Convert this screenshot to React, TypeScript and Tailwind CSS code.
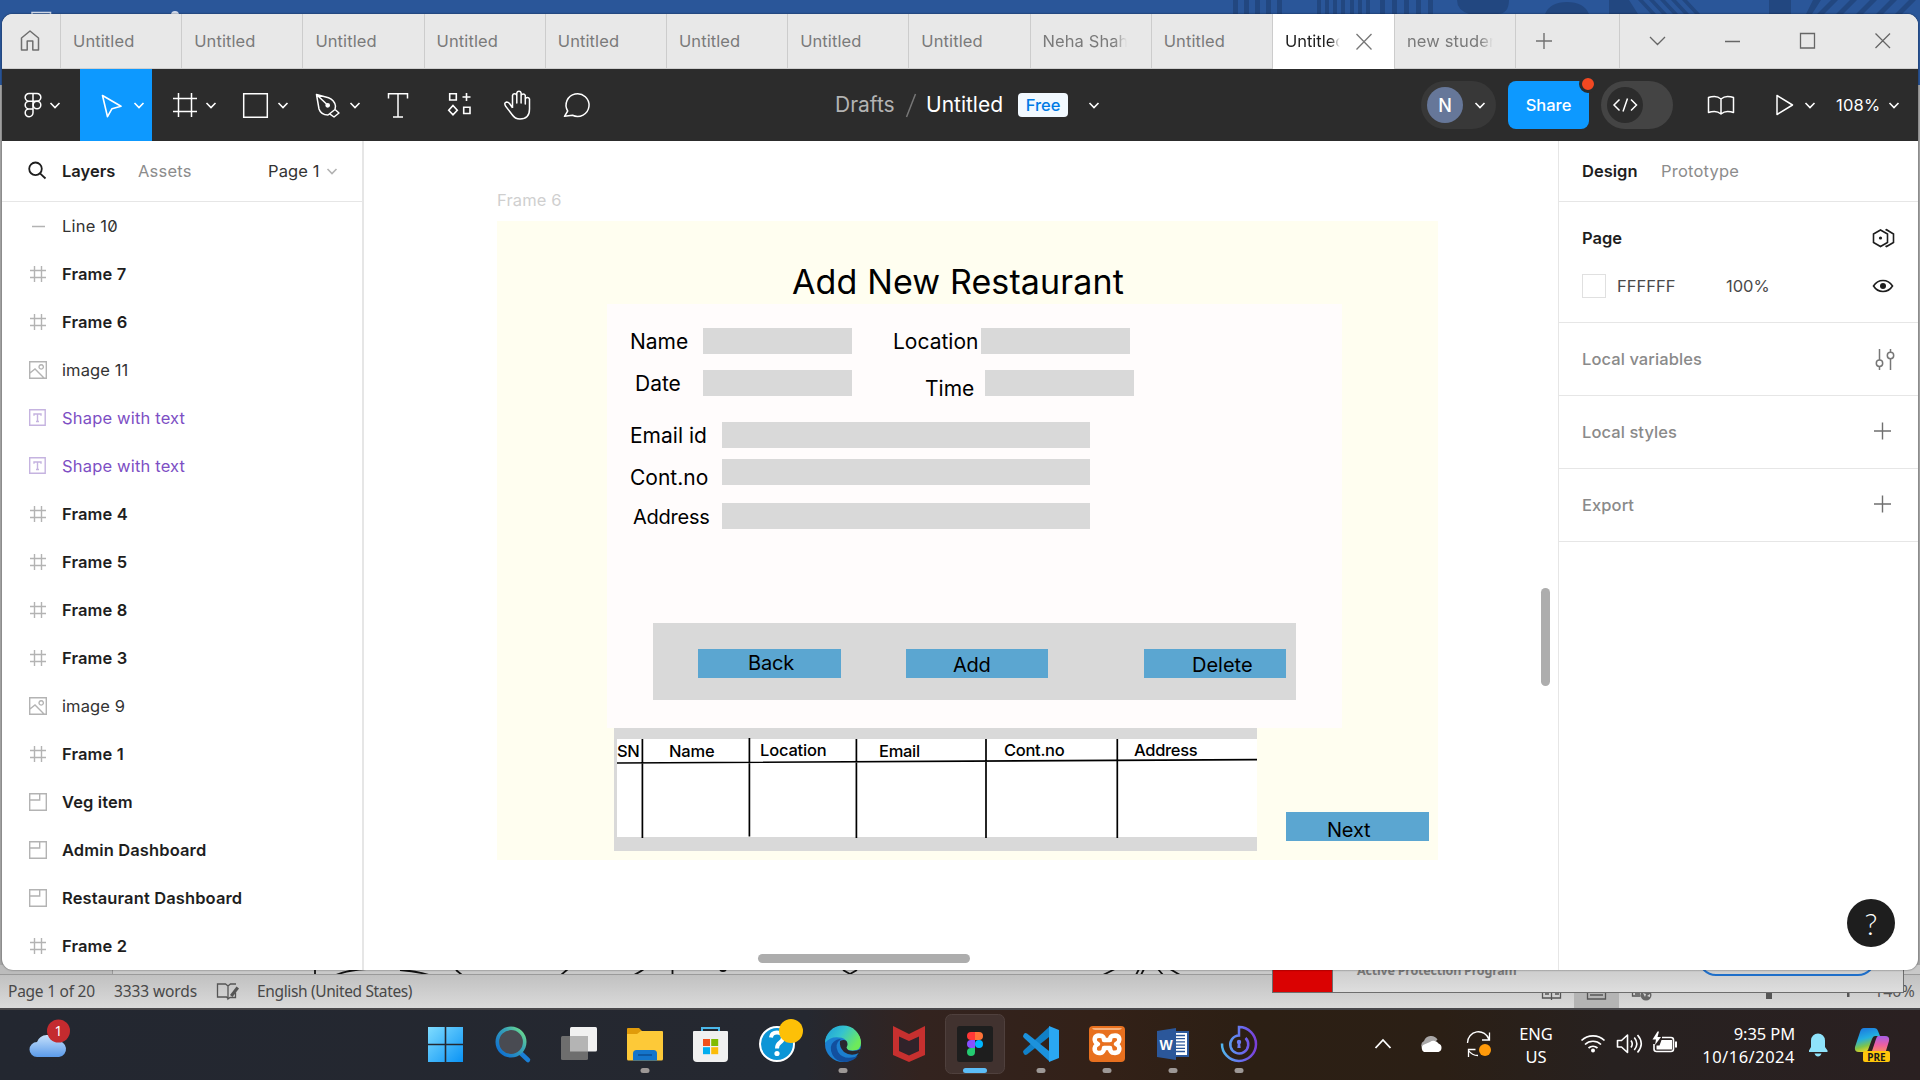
import React from "react";

type P = { children?: React.ReactNode };
type BoxProps = P & { box: [number, number, number, number]; className?: string };

/* An icon drawn in screen coordinates: box = x, y, width, height. */
function Icon({ box, className = "", children }: BoxProps) {
  return (
    <svg
      width={box[2]}
      height={box[3]}
      viewBox={box.join(" ")}
      fill="none"
      className={"block shrink-0 " + className}
    >
      {children}
    </svg>
  );
}

const Chev = ({ x, y = 103 }: { x: number; y?: number }) => (
  <path d={`M${x} ${y}l4.5 4.5l4.5 -4.5`} stroke="currentColor" strokeWidth="1.6" />
);

/* ---------- Title bar ---------- */

const tabs = ["Untitled", "Untitled", "Untitled", "Untitled", "Untitled", "Untitled", "Untitled", "Untitled", "Neha Shah", "Untitled"];

function TitleBar() {
  return (
    <div className="flex h-[55px] shrink-0 bg-[#e8e8e8] text-[16.5px] text-[#7a7a7a] border-b border-[#cfcfcf]">
      <Icon box={[2, 14, 58, 54]}>
        <path d="M21.500 50V38l8.500-7l8.500 7v12h-5.700V41h-5.600v9z" stroke="#6f6f6f" strokeWidth="1.5" strokeLinejoin="round" />
      </Icon>
      {tabs.map((t, i) => (
        <div key={i} className="flex w-[121.2px] shrink-0 items-center border-l border-[#cccccc] pl-[12px]">
          <span className={"block w-[84px] overflow-hidden whitespace-nowrap tracking-[0.1px] " + (i === 8 ? "[mask-image:linear-gradient(to_right,black_85%,transparent)]" : "")}>{t}</span>
        </div>
      ))}
      <div className="-mb-px flex w-[122px] shrink-0 items-center border-l border-[#cccccc] bg-white pl-[12px] text-[#1e1e1e]">
        <span className="block w-[55px] overflow-hidden whitespace-nowrap [mask-image:linear-gradient(to_right,black_82%,transparent)]">Untitled</span>
        <Icon box={[1340, 31, 36, 20]}>
          <path d="M1356.500 33l15 15.500m0-15.500l-15 15.500" stroke="#777" strokeWidth="1.3" />
        </Icon>
      </div>
      <div className="flex w-[121.500px] shrink-0 items-center border-l border-[#cccccc] pl-[12px]">
        <span className="block w-[86px] overflow-hidden whitespace-nowrap tracking-[0.15px] [mask-image:linear-gradient(to_right,black_85%,transparent)]">new student</span>
      </div>
      <div className="w-[104px] shrink-0 border-l border-[#cccccc]">
        <Icon box={[1516, 14, 80, 54]}>
          <path d="M1536 41h16M1544 33v16" stroke="#707070" strokeWidth="1.4" />
        </Icon>
      </div>
      <div className="flex-1 border-l border-[#cccccc]">
        <Icon box={[1620, 14, 290, 54]}>
          <path d="M1650 37l7.500 7.500l7.500-7.500M1725 41.500h15M1800.500 33.500h14v14.500h-14zM1875.500 33.500l14.500 14.500m0-14.500l-14.500 14.500" stroke="#666" strokeWidth="1.3" />
        </Icon>
      </div>
    </div>
  );
}

/* ---------- Toolbar ---------- */

function Toolbar() {
  return (
    <div className="flex h-[72px] shrink-0 items-center justify-between bg-[#2c2c2c] text-white">
      <div className="flex w-[833px]">
        <Icon box={[2, 69, 78, 72]}>
          <g stroke="#fff" strokeWidth="1.5">
            <path d="M33 93.500h-4a3.800 3.800 0 0 0 0 7.700h4zM33 93.500h4a3.800 3.800 0 0 1 0 7.700h-4zM33 101.200h-4a3.800 3.800 0 0 0 0 7.700h4zM33 108.900h-4a3.900 3.900 0 1 0 4 3.900z" />
            <circle cx="37" cy="105" r="3.800" />
          </g>
          <Chev x={50.500} />
        </Icon>
        <Icon box={[80, 69, 72, 72]} className="bg-[#0d99ff]">
          <path d="M102.500 95.500l18.500 10.800l-9 2.400l-4.500 8z" stroke="#fff" strokeWidth="1.6" strokeLinejoin="round" />
          <Chev x={134.500} />
        </Icon>
        <Icon box={[152, 69, 72, 72]}>
          <path d="M173 98.500h24M173 111.500h24M178.500 93v24M191.500 93v24" stroke="#fff" strokeWidth="1.5" />
          <Chev x={206.500} />
        </Icon>
        <Icon box={[224, 69, 72, 72]}>
          <path d="M243.700 93.700h23.600v23.600h-23.600z" stroke="#fff" strokeWidth="1.5" />
          <Chev x={278.500} />
        </Icon>
        <Icon box={[296, 69, 72, 72]}>
          <g stroke="#fff" strokeWidth="1.5" strokeLinejoin="round">
            <path d="M316.500 94.500l12 3.200q6 2.300 7 8.300l-.5 3.500l-7 5.500q-7 0-9-6zM317 95l9.500 9M335 109.500l4 3.500l-5 4l-4-2.800" />
            <circle cx="327.700" cy="105.300" r="1.600" fill="#fff" />
          </g>
          <Chev x={350.500} />
        </Icon>
        <Icon box={[368, 69, 60, 72]}>
          <path d="M388.500 98.500v-4.700h19v4.700M398 93.800v23M393 117h10" stroke="#fff" strokeWidth="1.5" />
        </Icon>
        <Icon box={[428, 69, 60, 72]}>
          <path d="M449.700 93.700h6.600v6.300h-6.600zM463.700 107.200h6.300v6.300h-6.300zM466.500 93v8M462.500 97h8M453 105.500l4.300 4.700l-4.300 4.700l-4.300-4.700z" stroke="#fff" strokeWidth="1.6" />
        </Icon>
        <Icon box={[488, 69, 60, 72]}>
          <path d="M512.500 108V95.500a2.200 2.200 0 0 1 4.300 0V103V93a2.200 2.200 0 0 1 4.300 0V103V95.500a2.200 2.200 0 0 1 4.200 0V104V99a2.200 2.200 0 0 1 4.200 0V109q0 10-9.500 10q-5 0-8-4.500l-6.500-8.500q-1.800-3.400 1.200-4q1.700 0 3 1.800l2.800 4" stroke="#fff" strokeWidth="1.500" strokeLinejoin="round" />
        </Icon>
        <Icon box={[548, 69, 60, 72]}>
          <path d="M564.500 116.300l3.200-5.300a11.500 11.300 0 1 1 4.800 4.300z" stroke="#fff" strokeWidth="1.500" strokeLinejoin="round" />
        </Icon>
      </div>

      <div className="flex items-center text-[21px]">
        <span className="w-[60px] text-[#b3b3b3]">Drafts</span>
        <Icon box={[895, 90, 31, 30]}>
          <path d="M906.500 117l9-23" stroke="#777" strokeWidth="1.5" />
        </Icon>
        <span className="w-[92px]">Untitled</span>
        <span className="flex h-[24px] w-[50px] items-center justify-center rounded-[4px] bg-[#f2f9ff] text-[16.5px] font-medium text-[#007be5]">Free</span>
        <Icon box={[1068, 93, 42, 24]}>
          <Chev x={1089.500} />
        </Icon>
      </div>

      <div className="flex flex-1 items-center justify-end">
        <div className="flex h-[48px] w-[75px] items-center rounded-full bg-[#383838] pl-[6px]">
          <span className="flex size-[36px] items-center justify-center rounded-full bg-[#667799] text-[18px] font-medium">N</span>
          <Icon box={[1463, 93, 30, 24]}>
            <Chev x={1475.500} />
          </Icon>
        </div>
        <div className="relative ml-[12px] flex h-[48px] w-[81px] items-center justify-center rounded-[8px] bg-[#0d99ff] text-[16.5px] font-medium">
          Share
          <span className="absolute -top-[6px] -right-[8px] size-[18px] rounded-full border-[3px] border-[#2c2c2c] bg-[#f24822]" />
        </div>
        <div className="ml-[12px] flex h-[48px] w-[72px] items-center rounded-full bg-[#444444] pl-[6px]">
          <Icon box={[1607, 87, 36, 36]} className="rounded-full bg-[#2c2c2c]">
            <path d="M1619.500 99.500l-5.500 5.500l5.500 5.500M1631 99.500l5.500 5.500l-5.500 5.500M1627.500 98.500l-4.500 13" stroke="#fff" strokeWidth="1.5" />
          </Icon>
        </div>
        <Icon box={[1673, 69, 163, 72]}>
          <path d="M1721 99q-3-2.500-6.500-2.500t-6 1v15q2.500-1 6-1t6.500 2.500q3-2.500 6.500-2.500t6 1v-15q-2.500-1-6-1t-6.500 2.500zM1721 99v15M1777 95.500v19l15.500-9.500z" stroke="#fff" strokeWidth="1.5" strokeLinejoin="round" />
          <Chev x={1805.500} />
        </Icon>
        <span className="w-[46px] whitespace-nowrap text-[16.5px] tracking-[0.25px]">108%</span>
        <Icon box={[1882, 69, 36, 72]}>
          <Chev x={1889.500} />
        </Icon>
      </div>
    </div>
  );
}

/* ---------- Layers panel ---------- */

type Kind = "line" | "frame" | "image" | "text" | "section";
const layers: [Kind, string][] = [
  ["line", "Line 10"],
  ["frame", "Frame 7"],
  ["frame", "Frame 6"],
  ["image", "image 11"],
  ["text", "Shape with text"],
  ["text", "Shape with text"],
  ["frame", "Frame 4"],
  ["frame", "Frame 5"],
  ["frame", "Frame 8"],
  ["frame", "Frame 3"],
  ["image", "image 9"],
  ["frame", "Frame 1"],
  ["section", "Veg item"],
  ["section", "Admin Dashboard"],
  ["section", "Restaurant Dashboard"],
  ["frame", "Frame 2"],
];

const kindPath: Record<Kind, string> = {
  line: "M3 9.500h13",
  frame: "M1 5.500h16M1 12.500h16M5.500 1v16M12.500 1v16",
  image: "M.7 .7h16.600v16.600h-16.600zM1 12l5-4l9 9M12.200 3.700a2.200 2.200 0 1 0 .01 0",
  text: "M.7 .7h15.500v15.500h-15.500zM5 6.700v-1.700h7v1.700M8.500 5v7.500M7 12.500h3",
  section: "M.7 .7h16.600v16.600h-16.600zM.7 7h10v-6.300",
};

const kindText: Record<Kind, string> = {
  line: "text-[#333] slashed-zero tracking-[0.2px]",
  image: "text-[#333] tracking-[0.1px]",
  frame: "font-semibold text-[#1e1e1e] tracking-[0.12px]",
  section: "font-semibold text-[#1e1e1e] tracking-[0.12px]",
  text: "text-[#7d4fc4] tracking-[0.18px]",
};

function LayersPanel() {
  return (
    <div className="flex w-[362px] shrink-0 flex-col border-r-2 border-[#e6e6e6] text-[16.5px]">
      <div className="flex h-[61px] shrink-0 items-center border-b border-[#e6e6e6]">
        <Icon box={[2, 155, 60, 32]}>
          <circle cx="35.500" cy="168.800" r="6.300" stroke="#1e1e1e" strokeWidth="1.800" />
          <path d="M40 173.300l5.500 5.200" stroke="#1e1e1e" strokeWidth="1.800" />
        </Icon>
        <span className="w-[76px] font-semibold text-[#1e1e1e]">Layers</span>
        <span className="w-[130px] text-[#8c8c8c] tracking-[0.2px]">Assets</span>
        <span className="w-[58px] whitespace-nowrap text-[#333] tracking-[0.1px]">Page 1</span>
        <Icon box={[326, 160, 14, 24]} className="text-[#b3b3b3]">
          <Chev x={327.500} y={170} />
        </Icon>
      </div>
      <div className="flex flex-col">
        {layers.map(([kind, name], i) => (
          <div key={i} className="flex h-[48px] items-center pl-[27px]">
            <svg width="18" height="18" viewBox="0 0 18 18" fill="none" className="shrink-0">
              <path d={kindPath[kind]} stroke={kind === "text" ? "#c5b3e0" : "#b3b3b3"} strokeWidth="1.400" />
            </svg>
            <span className={"ml-[15px] " + kindText[kind]}>{name}</span>
          </div>
        ))}
      </div>
    </div>
  );
}

/* ---------- Canvas ---------- */

const T = ({ className, children }: P & { className: string }) => (
  <span className={"absolute whitespace-nowrap leading-none text-black " + className}>{children}</span>
);
const R = ({ className }: { className: string }) => <div className={"absolute " + className} />;

/* Items are placed relative to the frame's top-left corner. */
function Canvas() {
  return (
    <div className="relative flex-1 overflow-hidden bg-white">
      <span className="absolute left-[133px] top-[51px] text-[16.5px] leading-[16px] tracking-[0.15px] text-[#cfcfcf]">Frame 6</span>
      <div className="absolute left-[133px] top-[80px] h-[639px] w-[941px] bg-[#fffef0]">
        <T className="left-[295px] top-[44px] text-[34px] tracking-[0.13px]">Add New Restaurant</T>
        <R className="left-[110px] top-[83px] h-[424px] w-[735px] bg-[#fffcfc]" />

        <T className="left-[133px] top-[110px] text-[21px]">Name</T>
        <R className="left-[206px] top-[107px] h-[26px] w-[149px] bg-[#d9d9d9]" />
        <T className="left-[396px] top-[110px] text-[21px]">Location</T>
        <R className="left-[483.500px] top-[107px] h-[26px] w-[149px] bg-[#d9d9d9]" />
        <T className="left-[138px] top-[152px] text-[21px]">Date</T>
        <R className="left-[206px] top-[149px] h-[26px] w-[149px] bg-[#d9d9d9]" />
        <T className="left-[428px] top-[157px] text-[21px]">Time</T>
        <R className="left-[488px] top-[149px] h-[26px] w-[149px] bg-[#d9d9d9]" />
        <T className="left-[133px] top-[204px] text-[21px]">Email id</T>
        <R className="left-[225px] top-[201px] h-[26px] w-[368px] bg-[#d9d9d9]" />
        <T className="left-[133px] top-[246px] text-[21px]">Cont.no</T>
        <R className="left-[225px] top-[238px] h-[26px] w-[368px] bg-[#d9d9d9]" />
        <T className="left-[136px] top-[286px] text-[20px] tracking-[-0.25px]">Address</T>
        <R className="left-[225px] top-[282px] h-[26px] w-[368px] bg-[#d9d9d9]" />

        <R className="left-[156px] top-[402px] h-[77px] w-[643px] bg-[#d9d9d9]" />
        <R className="left-[201px] top-[428px] h-[29px] w-[143px] bg-[#5ba6d1]" />
        <T className="left-[251px] top-[432px] text-[20px] tracking-[-0.2px]">Back</T>
        <R className="left-[409px] top-[428px] h-[29px] w-[142px] bg-[#5ba6d1]" />
        <T className="left-[456px] top-[434px] text-[20px] tracking-[-0.3px]">Add</T>
        <R className="left-[647px] top-[428px] h-[29px] w-[142px] bg-[#5ba6d1]" />
        <T className="left-[695px] top-[434px] text-[20px]">Delete</T>

        <R className="left-[117px] top-[507px] h-[123px] w-[643px] bg-[#d9d9d9]" />
        <R className="left-[120px] top-[518px] h-[98px] w-[640px] bg-white" />
        <T className="left-[120px] top-[522px] text-[16.5px] font-medium tracking-[-0.4px]">SN</T>
        <T className="left-[172px] top-[522px] text-[16.5px] font-medium tracking-[-0.15px]">Name</T>
        <T className="left-[263px] top-[521px] text-[16.5px] font-medium tracking-[-0.2px]">Location</T>
        <T className="left-[382px] top-[522px] text-[16.5px] font-medium tracking-[-0.3px]">Email</T>
        <T className="left-[507px] top-[521px] text-[16.5px] font-medium tracking-[-0.3px]">Cont.no</T>
        <T className="left-[637px] top-[521px] text-[16.5px] font-medium tracking-[-0.3px]">Address</T>
        <Icon box={[614, 728, 643, 123]} className="absolute left-[117px] top-[507px]">
          <path d="M642.400 739v99M749.400 738v98.500M856.400 739v99M986 739v99M1117.300 739v99M617 763l640-3.300" stroke="#000" strokeWidth="1.700" />
        </Icon>

        <R className="left-[789px] top-[591px] h-[29px] w-[143px] bg-[#5ba6d1]" />
        <T className="left-[830px] top-[599px] text-[20px] tracking-[-0.2px]">Next</T>
      </div>
      <R className="left-[394px] top-[813px] h-[9px] w-[212px] rounded-full bg-[#adadad]" />
      <R className="left-[1177px] top-[447px] h-[98px] w-[9px] rounded-full bg-[#adadad]" />
    </div>
  );
}

/* ---------- Design panel ---------- */

const plusIcon = (
  <Icon box={[1870, 420, 30, 24]}>
    <path d="M1874 431h17M1882.500 422.500v17" stroke="#6f6f6f" strokeWidth="1.400" />
  </Icon>
);

const Section = ({ label, children }: P & { label: string }) => (
  <div className="flex h-[73px] shrink-0 items-center justify-between border-b border-[#e6e6e6] pl-[23px] pr-[18px] font-medium tracking-[0.08px] text-[#8a8a8a]">
    <span>{label}</span>
    {children}
  </div>
);

function DesignPanel() {
  return (
    <div className="relative flex w-[360px] shrink-0 flex-col border-l border-[#e6e6e6] text-[16.5px]">
      <div className="flex h-[61px] shrink-0 items-center border-b border-[#e6e6e6] pl-[23px]">
        <span className="w-[79px] font-semibold text-[#1e1e1e]">Design</span>
        <span className="tracking-[0.2px] text-[#8c8c8c]">Prototype</span>
      </div>
      <div className="flex h-[121px] shrink-0 flex-col border-b border-[#e6e6e6] pt-[12px] pl-[23px] pr-[18px]">
        <div className="flex h-[48px] items-center justify-between font-semibold text-[#1e1e1e]">
          <span>Page</span>
          <Icon box={[1870, 226, 30, 24]}>
            <path d="M1880.500 230l7 4v8.500l-7 4l-7-4v-8.500zM1885.500 230l1-.3l7 4.300v8.500l-7 4l-1-.5" stroke="#1e1e1e" strokeWidth="1.600" />
            <circle cx="1880.500" cy="238" r="1.600" fill="#1e1e1e" />
          </Icon>
        </div>
        <div className="flex h-[48px] items-center text-[#4a4a4a]">
          <span className="size-[24px] border border-[#e0e0e0]" />
          <span className="ml-[11px] w-[109px]">FFFFFF</span>
          <span className="flex-1">100%</span>
          <Icon box={[1870, 274, 30, 24]}>
            <path d="M1873.500 286q3.500-5.500 9.500-5.500t9.500 5.500q-3.500 5.500-9.500 5.500t-9.500-5.500z" stroke="#1e1e1e" strokeWidth="1.600" />
            <circle cx="1883" cy="286" r="3" fill="#1e1e1e" />
          </Icon>
        </div>
      </div>
      <Section label="Local variables">
        <Icon box={[1870, 347, 30, 25]}>
          <g stroke="#777" strokeWidth="1.500">
            <path d="M1879.500 349v11M1879.500 366.500v3.500M1890.500 349v3M1890.500 358.500v11.500" />
            <circle cx="1879.500" cy="363.300" r="3.200" />
            <circle cx="1890.500" cy="355.500" r="3.200" />
          </g>
        </Icon>
      </Section>
      <Section label="Local styles">{plusIcon}</Section>
      <Section label="Export">{plusIcon}</Section>
      <div className="absolute bottom-[23px] right-[23px] flex size-[48px] items-center justify-center rounded-full bg-[#1e1e1e] font-['Lato','Open_Sans',sans-serif] text-[30px] leading-none font-light text-white">
        ?
      </div>
    </div>
  );
}

/* ---------- Word window behind ---------- */

function WordTop() {
  return (
    <div className="h-[85px] overflow-hidden bg-[#2a5699]">
      <Icon box={[0, 0, 1920, 14]}>
        <path d="M32 14v-1.500h18.500v1.500" stroke="#d5dded" strokeWidth="1.500" />
        <circle cx="175" cy="15" r="4" fill="#d5dded" />
        <g fill="#224780">
          <path d="M1233 0h5v14h-5zM1244 0h5v14h-5zM1255 0h5v14h-5zM1266 0h5v14h-5zM1277 0h5v14h-5zM1317 0h4v14h-4zM1325 0h4v14h-4zM1333 0h4v14h-4zM1341 0h4v14h-4zM1350 0h4v14h-4zM1358 0h4v14h-4zM1366 0h4v14h-4zM1380 0h5v14h-5zM1392 0h5v14h-5zM1404 0h5v14h-5zM1416 0h5v14h-5zM1428 0h5v14h-5z" />
          <path d="M1457 0h52q0 14-12 14h-28q-12-4-12-14zM1545 14q5-12 22-12t22 12zM1609 0h20l9 14h-29zM1638 0h5l13 14h-5zM1649 0h5l13 14h-5zM1660 0h5l13 14h-5zM1671 0h5l13 14h-5zM1682 0h5l13 14h-5zM1769 0h22v14h-22zM1813 0h8l-9 14h-6zM1831 0h7l-14 14h-7zM1850 0h7l-14 14h-7zM1870 0h7l-14 14h-7zM1890 0h7l-14 14h-7zM1909 0h7l-14 14h-7z" />
        </g>
      </Icon>
    </div>
  );
}

function WordBottom() {
  return (
    <div className="relative h-[43px] bg-[#d2d2d2]">
      <div className="h-[10px] border-b border-[#9a9a9a] bg-[#c9c9c9]">
        <Icon box={[0, 965, 1272, 9]}>
          <path d="M0 965h112v9h-112z" fill="#bcbcbc" />
          <path d="M112.500 965v9" stroke="#999" />
          <path d="M315 965v9M336 975q12-5 30-6M400 970q16 1 29 5M456 970l6 5M561 975l7-6M634 975q6-3 10-6M672.500 965v9M720 970q3 2 6 0M843 970l7 4l7-4M1103 975l12-6M1136 975l3-6M1141 975l3-6M1158 969l5 6M1170 969l10 6" stroke="#111" strokeWidth="1.800" />
        </Icon>
      </div>
      <div className="flex h-[33px] items-center bg-linear-to-b from-[#c1c1c1] to-[#dadada] pl-[8px] font-['Noto_Sans','Open_Sans',sans-serif] text-[15.5px] text-[#484848]">
        <span className="w-[106px] whitespace-nowrap tracking-[-0.25px]">Page 1 of 20</span>
        <span className="w-[101px] whitespace-nowrap tracking-[-0.1px]">3333 words</span>
        <Icon box={[215, 981, 42, 20]}>
          <path d="M228 997.500l-1.500-1.500h-9v-13h8l2.500 2l2.500-2h5.500M228 985v13l2-1.500h5.500v-5" stroke="#555" strokeWidth="1.300" />
          <path d="M230 994l6.500-8.500l2.500 2l-6.500 8.500z" fill="#555" />
        </Icon>
        <span className="whitespace-nowrap tracking-[-0.36px]">English (United States)</span>
      </div>
      {/* view switcher and zoom, partly hidden by the notification card */}
      <Icon box={[1530, 990, 390, 18]} className="absolute right-0 bottom-0">
        <path d="M1574 990h45v18h-45z" fill="#b4b4b4" />
        <path d="M1542.500 992v6h18v-6M1551.500 990v10M1545 994h4M1555 994h4M1587.500 992v7h18v-7M1590 995h13M1632.500 991v5h8M1635 994h5" stroke="#555" strokeWidth="1.300" />
        <circle cx="1646" cy="995" r="5.500" fill="#666" />
        <path d="M1643 993l3 1l-1 3zM1647 996l3-2v3z" fill="#d4d4d4" />
        <path d="M1766 990h6v9h-6zM1847 990h2.500v7h-2.500z" fill="#555" />
      </Icon>
      <span className="absolute bottom-[7px] left-[1874px] font-['Noto_Sans',sans-serif] text-[16px] leading-[20px] text-[#555]">140%</span>
      <div className="absolute left-[1272px] top-0 flex h-[28px] w-[632px] overflow-hidden border border-[#6d6d6d] bg-linear-to-b from-[#cacaca] to-[#dedede]">
        <div className="w-[60px] border-r border-[#6d6d6d] bg-[#da0202]" />
        <span className="ml-[24px] -mt-[4px] flex-1 font-['Noto_Sans','Open_Sans',sans-serif] text-[12.5px] leading-[18px] font-bold tracking-[-0.2px] text-[#777]">Active Protection Program</span>
        <div className="-mt-[10px] mr-[27px] h-[20px] w-[178px] rounded-b-[18px] border-2 border-[#1f6fc9]" />
      </div>
    </div>
  );
}

/* ---------- Taskbar ---------- */

const Running = ({ x }: { x: number }) => <rect x={x - 4.500} y="1068" width="9" height="5" rx="2.500" fill="#9d9896" />;

function Taskbar() {
  return (
    <div className="flex h-[72px] items-center border-t-2 border-[#48474a] bg-[linear-gradient(to_right,#232730_0%,#252830_42%,#33231f_48%,#332118_57%,#2c1f14_65%,#2b1f15_75%,#272120_84%,#2a2021_100%)] text-white">
      <div className="w-[413px]">
        <Icon box={[0, 1010, 80, 70]}>
          <defs>
            <linearGradient id="cloud" x1="0" y1="0" x2="0" y2="1">
              <stop offset="0" stopColor="#c5e0fb" />
              <stop offset="1" stopColor="#5b9bea" />
            </linearGradient>
          </defs>
          <path d="M37 1057a7.500 7.500 0 0 1 0-15a11 11 0 0 1 20-1a8 8 0 0 1 2 16z" fill="url(#cloud)" />
          <circle cx="58.500" cy="1031" r="11.500" fill="#c42b2f" />
          <text x="58.500" y="1036" textAnchor="middle" fontSize="14" fill="#fff" fontFamily="Noto Sans, sans-serif">1</text>
        </Icon>
      </div>
      <div className="flex">
        {/* Start */}
        <Icon box={[413, 1010, 66, 70]}>
          <defs>
            <linearGradient id="win" gradientUnits="userSpaceOnUse" x1="428" y1="1027" x2="463" y2="1062">
              <stop offset="0" stopColor="#7fdcff" />
              <stop offset="1" stopColor="#0a93f5" />
            </linearGradient>
          </defs>
          <path d="M428 1027h16.700v16.700h-16.700zM446.300 1027h16.700v16.700h-16.700zM428 1045.300h16.700v16.700h-16.700zM446.300 1045.300h16.700v16.700h-16.700z" fill="url(#win)" />
        </Icon>
        {/* Search */}
        <Icon box={[479, 1010, 66, 70]}>
          <defs>
            <linearGradient id="srch" gradientUnits="userSpaceOnUse" x1="524" y1="1030" x2="500" y2="1052">
              <stop offset="0" stopColor="#6fe08a" />
              <stop offset=".4" stopColor="#3aa5b5" />
              <stop offset="1" stopColor="#1173cf" />
            </linearGradient>
          </defs>
          <path d="M519.500 1052l8.500 8" stroke="#1a7fd6" strokeWidth="4.500" strokeLinecap="round" />
          <circle cx="511" cy="1042" r="13.700" fill="#494b52" stroke="url(#srch)" strokeWidth="3.600" />
        </Icon>
        {/* Task view */}
        <Icon box={[545, 1010, 66, 70]}>
          <rect x="570" y="1027" width="27" height="24.500" rx="1.500" fill="#f1f1f1" />
          <rect x="561" y="1036" width="27" height="24" rx="1.500" fill="#6e6e6e" />
          <path d="M570 1036h18v15.500h-18z" fill="#b4b4b4" />
        </Icon>
        {/* Explorer */}
        <Icon box={[611, 1010, 66, 70]}>
          <path d="M627 1029q0-1 1-1h11l4 4h-2l-4 4h-10z" fill="#e09b0b" />
          <path d="M627 1034h10l4-3h21q1 0 1 1v27q0 1.500-1.500 1.500h-33q-1.500 0-1.500-1.500z" fill="#fdc938" />
          <path d="M633 1060.500v-7q0-3.500 3.500-3.500h17q3.500 0 3.500 3.500v7z" fill="#1475cb" />
          <path d="M638 1055h14" stroke="#0b4f94" strokeWidth="1.500" />
          <Running x={645} />
        </Icon>
        {/* Store */}
        <Icon box={[677, 1010, 66, 70]}>
          <path d="M702 1034v-6h17v6" stroke="#4bb8ea" strokeWidth="2" />
          <path d="M693 1032q0-1 1-1h33q1 0 1 1v26q0 4-4 4h-27q-4 0-4-4z" fill="#f0f0f0" />
          <path d="M703 1039h7v7h-7z" fill="#f1511b" />
          <path d="M711.200 1039h7v7h-7z" fill="#80bb01" />
          <path d="M703 1047.200h7v7h-7z" fill="#02adef" />
          <path d="M711.200 1047.200h7v7h-7z" fill="#fbbc09" />
        </Icon>
        {/* Help */}
        <Icon box={[743, 1010, 66, 70]}>
          <circle cx="777" cy="1044" r="17" fill="#0c95d6" stroke="#fff" strokeWidth="2" />
          <path d="M771 1037.500q.5-5 6-5t6 5q0 3-3 5t-3 6" stroke="#fff" strokeWidth="4" />
          <circle cx="777" cy="1053.500" r="2.600" fill="#fff" />
          <circle cx="791" cy="1031" r="12" fill="#fdc007" />
        </Icon>
        {/* Edge */}
        <Icon box={[809, 1010, 66, 70]}>
          <defs>
            <linearGradient id="edgeTop" x1="0" y1="0" x2="1" y2=".5">
              <stop offset="0" stopColor="#1c9cdb" />
              <stop offset=".5" stopColor="#35c3cf" />
              <stop offset="1" stopColor="#6eea5a" />
            </linearGradient>
          </defs>
          <circle cx="843" cy="1044" r="18" fill="#1b7fd0" />
          <path d="M825 1043a18 17.500 0 0 1 36 0q0 7.500-8 7.500q-7 0-7-3q2-2 1-5q-2-5-8-5q-9-1-14 5.500z" fill="url(#edgeTop)" />
          <path d="M841 1039q-7 5-3 13q5 8 17 5q3-1 3.500-2q-5 7-14 7q-8 0-12-7q-4-9 1-13q3-3 7.500-3z" fill="#124f9e" />
          <path d="M840 1041q4-2 6.500 0q2 3 0 6.500q1 3.500 6 3.500q5 0 8-2l-1.500 4q-8 4-15-1q-5-5-4-11z" fill="#29272f" />
          <Running x={843} />
        </Icon>
        {/* McAfee */}
        <Icon box={[875, 1010, 66, 70]}>
          <path d="M893 1026l16 8l16-8v29l-16 7l-16-7z" fill="#c7302f" />
          <path d="M899 1036.500l10 4.500l10-4.500v14.500l-10 4.500l-10-4.500z" fill="#30232a" />
        </Icon>
        {/* Figma */}
        <Icon box={[941, 1010, 66, 70]}>
          <rect x="945.500" y="1014.500" width="59" height="59" rx="6" fill="#41322f" stroke="#4f403d" />
          <rect x="957" y="1026" width="36" height="36" rx="2.500" fill="#1e1e1e" />
          <path d="M975 1032h-4a4 4 0 0 0 0 8h4z" fill="#ff3737" />
          <path d="M975 1032h4a4 4 0 0 1 0 8h-4z" fill="#ff7237" />
          <path d="M975 1040h-4a4 4 0 0 0 0 8h4z" fill="#874fff" />
          <circle cx="979" cy="1044" r="4" fill="#00b6ff" />
          <path d="M975 1048h-4a4 4 0 1 0 4 4z" fill="#24cb71" />
          <rect x="963" y="1068" width="24" height="5" rx="2.500" fill="#5cbdf7" />
        </Icon>
        {/* VS Code */}
        <Icon box={[1007, 1010, 66, 70]}>
          <path d="M1049 1026l10 4v28l-10 4z" fill="#2aa7f2" />
          <path d="M1049 1027v10l-22 17.500q-2 1-3-.5l-1-2q0-1 1-2z" fill="#1180c8" />
          <path d="M1049 1061v-10l-22-17.500q-2-1-3 .5l-1 2q0 1 1 2z" fill="#1c92dd" />
          <Running x={1041} />
        </Icon>
        {/* XAMPP */}
        <Icon box={[1073, 1010, 66, 70]}>
          <rect x="1089" y="1026" width="36" height="36" rx="4" fill="#e8701f" />
          <path d="M1092 1028h30q-1 2-3 2h-24q-2 0-3-2z" fill="#f7b27e" />
          <path d="M1102 1036c-9-2-9 6-4 8c-5 2-5 11 4 8.500q2-1.500 2-4.500h6q0 3 2 4.500c9 2 9-6.500 4-8.500c5-2 5-10-4-8q-2 1-2 4h-6q0-3-2-4z" stroke="#fff" strokeWidth="4.500" strokeLinejoin="round" />
          <Running x={1107} />
        </Icon>
        {/* Word */}
        <Icon box={[1139, 1010, 66, 70]}>
          <path d="M1174 1032h14v24h-14z" fill="#fff" stroke="#2b579a" strokeWidth="2" />
          <path d="M1175 1035.500h10M1175 1038.700h10M1175 1041.900h10M1175 1045.100h10M1175 1048.300h10M1175 1051.500h10" stroke="#2b579a" strokeWidth="1.300" />
          <path d="M1157 1031l19-3v32l-19-3z" fill="#2b579a" />
          <text x="1166" y="1049.500" textAnchor="middle" fontSize="14" fontWeight="bold" fill="#fff" fontFamily="Liberation Sans, sans-serif">W</text>
          <Running x={1173} />
        </Icon>
        {/* Lock ring */}
        <Icon box={[1205, 1010, 66, 70]}>
          <defs>
            <linearGradient id="ring" x1="0" y1="0" x2="1" y2="0">
              <stop offset="0" stopColor="#52b5ec" />
              <stop offset=".6" stopColor="#6a6cf0" />
              <stop offset="1" stopColor="#7a3fd8" />
            </linearGradient>
          </defs>
          <path d="M1222 1043.500a17 17 0 1 0 17-16.500v8.500a9 9 0 1 0 6.500 2.500" stroke="url(#ring)" strokeWidth="2.500" />
          <circle cx="1239" cy="1042" r="2.200" fill="#6d7cf2" />
          <path d="M1238 1042h2l.7 6h-3.400z" fill="#6d7cf2" />
          <Running x={1239} />
        </Icon>
      </div>

      <div className="flex flex-1 items-center font-['Noto_Sans','Open_Sans',sans-serif] text-[16.5px] leading-[23px]">
        <Icon box={[1271, 1010, 240, 70]}>
          <path d="M1375.500 1048l7.500-8l7.500 8" stroke="#fff" strokeWidth="1.800" />
          <path d="M1424 1050a5 5 0 0 1 0-9a7.500 7.500 0 0 1 13.500-1.500l-8 8z" fill="#a9a7a7" />
          <path d="M1424 1052a4.500 4.500 0 0 1-1-7l7-3a6 6 0 0 1 8.500 1.500a4.500 4.500 0 0 1 0 8.500z" fill="#fff" />
          <path d="M1467.500 1043a11 11 0 0 1 21.500-3.500M1489.500 1032.500v7.500h-7.500M1478 1055.500q-6 0-9.500-5M1468.500 1057v-7.500h7" stroke="#fff" strokeWidth="1.300" />
          <circle cx="1485" cy="1050" r="6" fill="#ff9a0a" />
        </Icon>
        <div className="w-[50px] text-center">
          ENG
          <br />
          US
        </div>
        <Icon box={[1561, 1010, 120, 70]}>
          <path d="M1581.500 1040.500a16.500 16.500 0 0 1 23 0M1585 1044.500a11.500 11.500 0 0 1 16 0M1588.500 1048a6.800 6.800 0 0 1 9 0" stroke="#fff" strokeWidth="1.700" />
          <circle cx="1593" cy="1050.500" r="2" fill="#fff" />
          <path d="M1617.500 1040.500h4l6-5.500v17.500l-6-5.500h-4zM1631 1040.500q2.500 3.300 0 7M1634.300 1037.500q5 6.300 0 12.500M1637.500 1035q7.500 8.500 0 17.500" stroke="#fff" strokeWidth="1.600" strokeLinejoin="round" />
          <path d="M1662 1037.500h9q2.500 0 2.500 2.500v9q0 2.500-2.500 2.500h-14.500q-2.500 0-2.500-2.500v-5" stroke="#fff" strokeWidth="1.600" />
          <path d="M1661.500 1040h10.500v9.500h-15.500v-4h3z" fill="#fff" />
          <path d="M1675 1041.500h2v6h-2zM1657.500 1031.500l-5 8h3.500l-1 5.500l6-8h-3.500l1.500-5.500z" fill="#fff" />
        </Icon>
        <div className="flex w-[114px] flex-col items-end whitespace-nowrap text-right">
          <span className="tracking-[-0.1px]">9:35 PM</span>
          <span className="tracking-[0.5px]">10/16/2024</span>
        </div>
        <Icon box={[1795, 1010, 125, 70]}>
          <path d="M1809 1052v-1.500l2-3.500v-6.500a7 7 0 0 1 14 0v6.500l2.500 3.500v1.500z" fill="#8fe3fb" />
          <path d="M1814.500 1053.500h7q-1 3-3.500 3t-3.500-3z" fill="#8fe3fb" />
          <defs>
            <linearGradient id="cpA" x1="0" y1="0" x2=".3" y2="1">
              <stop offset="0" stopColor="#1a6fe0" />
              <stop offset=".5" stopColor="#23aee0" />
              <stop offset=".8" stopColor="#7fc44b" />
              <stop offset="1" stopColor="#e0d226" />
            </linearGradient>
            <linearGradient id="cpB" x1="0" y1="0" x2="0" y2="1">
              <stop offset="0" stopColor="#a65fe8" />
              <stop offset=".5" stopColor="#ee5fa0" />
              <stop offset="1" stopColor="#fb9a4b" />
            </linearGradient>
          </defs>
          <path d="M1864 1028h10q3 0 4 3l2 5h-5q-2 0-3 3l-4 11q-1 2-3 2h-6q-5 0-4-5l5-15q1-4 4-4z" fill="url(#cpA)" />
          <path d="M1878 1036h7q5 0 4 5l-4 13h-16q2 0 3-3l4-12q1-3 2-3z" fill="url(#cpB)" />
          <rect x="1863" y="1051" width="27" height="11" rx="2" fill="#ffc60b" />
          <text x="1876.500" y="1060.500" textAnchor="middle" fontSize="10" fontWeight="bold" fill="#1a1a1a" fontFamily="Noto Sans, sans-serif">PRE</text>
        </Icon>
      </div>
    </div>
  );
}

export default function App() {
  return (
    <div className="relative flex h-[1080px] w-[1920px] flex-col overflow-hidden bg-[#a6a6a6] font-['Inter','Liberation_Sans',sans-serif]">
      <WordTop />
      <div className="flex-1" />
      <WordBottom />
      <Taskbar />
      <div className="absolute left-[2px] top-[14px] flex h-[956px] w-[1916px] flex-col overflow-hidden rounded-[11px] bg-white shadow-[0_0_2px_rgba(0,0,0,0.6)]">
        <TitleBar />
        <Toolbar />
        <div className="flex min-h-0 flex-1">
          <LayersPanel />
          <Canvas />
          <DesignPanel />
        </div>
      </div>
    </div>
  );
}
